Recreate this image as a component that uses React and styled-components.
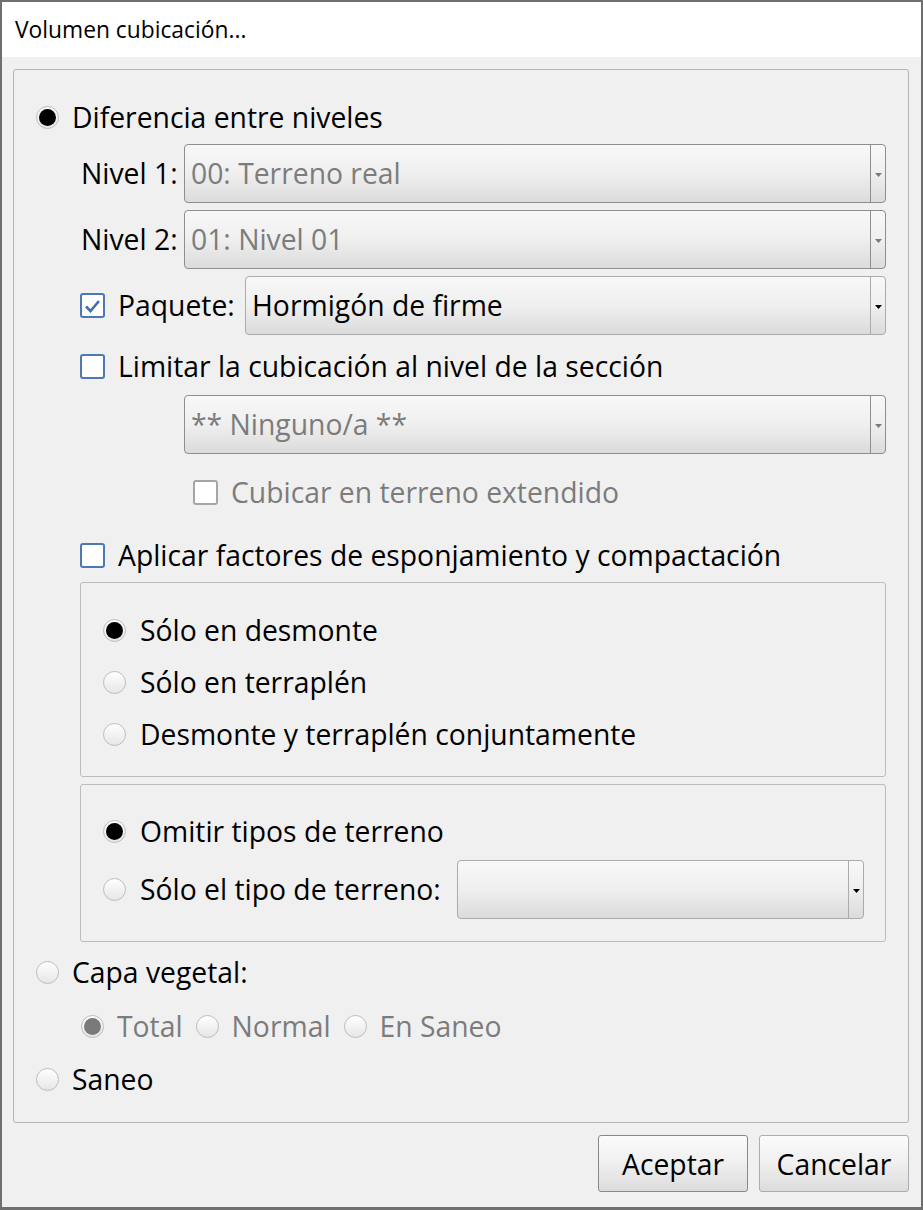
import styled, { createGlobalStyle } from "styled-components";

const GlobalStyle = createGlobalStyle`
  html, body {
    margin: 0;
    padding: 0;
    background: #ffffff;
  }
  * {
    box-sizing: border-box;
  }
`;

const FONT = `"Open Sans", "Liberation Sans", sans-serif`;

const Window = styled.div`
  width: 923px;
  height: 1210px;
  border: 2px solid #6f6f6f;
  border-bottom-width: 3px;
  display: flex;
  flex-direction: column;
  font-family: ${FONT};
  font-size: 28.3px;
  line-height: 1.3;
  color: #000;
  background: #f0f0f0;
`;

const TitleBar = styled.div`
  height: 55px;
  flex-shrink: 0;
  background: #ffffff;
  display: flex;
  align-items: center;
  padding-left: 13px;
  font-size: 22.8px;
`;

const Body = styled.div`
  flex: 1;
  display: flex;
  flex-direction: column;
  padding: 12px 12px 16px 11px;
`;

const Panel = styled.div`
  border: 1px solid #b4b4b4;
  border-radius: 3px;
  padding: 27px 22px 23px 22px;
  display: flex;
  flex-direction: column;
`;

const Row = styled.div`
  display: flex;
  align-items: center;
  height: ${(p) => p.$height || 40}px;
  margin-top: ${(p) => p.$top || 0}px;
  margin-left: ${(p) => p.$indent || 0}px;
`;

const Group = styled.div`
  margin-top: ${(p) => p.$top || 0}px;
  margin-left: 44px;
  border: 1px solid #bcbcbc;
  border-radius: 3px;
  padding: ${(p) => p.$pad || "27px 21px 22px 22px"};
  display: flex;
  flex-direction: column;
`;

const Text = styled.span`
  color: ${(p) => (p.$disabled ? "#7c7c7c" : "#000")};
  margin-left: ${(p) => p.$gap ?? 13}px;
  white-space: nowrap;
  width: ${(p) => (p.$width ? `${p.$width}px` : "auto")};
  flex-shrink: 0;
`;

const Radio = styled.span`
  width: 23px;
  height: 23px;
  flex-shrink: 0;
  border-radius: 50%;
  border: 1px solid #bdbdbd;
  background: linear-gradient(#ffffff, #e6e6e6);
  display: flex;
  align-items: center;
  justify-content: center;
  margin-left: ${(p) => p.$left || 0}px;

  &::after {
    content: "";
    display: ${(p) => (p.$checked ? "block" : "none")};
    width: 17px;
    height: 17px;
    border-radius: 50%;
    background: ${(p) => (p.$disabled ? "#7a7a7a" : "#000")};
  }
`;

const Check = styled.span`
  width: 25px;
  height: 25px;
  flex-shrink: 0;
  border: 2px solid ${(p) => (p.$disabled ? "#a6a6a6" : "#4a79b5")};
  border-radius: 3px;
  background: #ffffff;
  display: flex;
  align-items: center;
  justify-content: center;

  svg {
    display: block;
  }
`;

const Combo = styled.div`
  flex: 1;
  height: 59px;
  margin-left: ${(p) => p.$left || 0}px;
  border: 1px solid ${(p) => (p.$disabled ? "#8e8e8e" : "#ababab")};
  border-radius: 4px;
  background: linear-gradient(#f8f8f8 0%, #efefef 50%, #dbdbdb 100%);
  display: flex;
  align-items: stretch;
  color: ${(p) => (p.$disabled ? "#7c7c7c" : "#000")};
`;

const ComboValue = styled.div`
  flex: 1;
  display: flex;
  align-items: center;
  padding-left: 6px;
  white-space: nowrap;
  overflow: hidden;
`;

const ComboArrow = styled.div`
  width: 15px;
  border-left: 1px solid ${(p) => (p.$disabled ? "#8e8e8e" : "#ababab")};
  display: flex;
  align-items: center;
  justify-content: center;
  padding-top: 3px;
`;

const Footer = styled.div`
  display: flex;
  justify-content: flex-end;
  gap: 11px;
  margin-top: 12px;
`;

const Button = styled.button`
  width: 150px;
  height: 57px;
  font-family: ${FONT};
  font-size: 28.3px;
  color: #000;
  border: 1px solid ${(p) => (p.$primary ? "#888888" : "#adadad")};
  border-radius: 3px;
  background: linear-gradient(#fbfbfb 0%, #efefef 50%, #dcdcdc 100%);
  padding: 0;
`;

const CheckBox = ({ checked, disabled }) => (
  <Check $disabled={disabled}>
    {checked && (
      <svg width="17" height="14" viewBox="0 0 17 14">
        <path
          d="M2 7.5 L6.5 12 L15 2"
          fill="none"
          stroke="#3e6fb0"
          strokeWidth="2.6"
        />
      </svg>
    )}
  </Check>
);

const Select = ({ value, disabled, left }) => (
  <Combo $disabled={disabled} $left={left}>
    <ComboValue>{value}</ComboValue>
    <ComboArrow $disabled={disabled}>
      <svg width="7" height="4" viewBox="0 0 7 4">
        <path d="M0 0 L7 0 L3.5 4 Z" fill={disabled ? "#7a7a7a" : "#000"} />
      </svg>
    </ComboArrow>
  </Combo>
);

export default function App() {
  return (
    <>
      <GlobalStyle />
      <Window>
        <TitleBar>Volumen cubicación...</TitleBar>
        <Body>
          <Panel>
            <Row>
              <Radio $checked />
              <Text>Diferencia entre niveles</Text>
            </Row>

            <Row $top={7} $indent={45} $height={59}>
              <Text $gap={0} $width={103}>Nivel 1:</Text>
              <Select value="00: Terreno real" disabled />
            </Row>
            <Row $top={7} $indent={45} $height={59}>
              <Text $gap={0} $width={103}>Nivel 2:</Text>
              <Select value="01: Nivel 01" disabled />
            </Row>
            <Row $top={7} $indent={44} $height={59}>
              <CheckBox checked />
              <Text $width={127}>Paquete:</Text>
              <Select value="Hormigón de firme" />
            </Row>

            <Row $top={11} $indent={44}>
              <CheckBox />
              <Text>Limitar la cubicación al nivel de la sección</Text>
            </Row>
            <Row $top={9} $indent={148} $height={59}>
              <Select value="** Ninguno/a **" disabled />
            </Row>
            <Row $top={18} $indent={157}>
              <CheckBox disabled />
              <Text $disabled>Cubicar en terreno extendido</Text>
            </Row>

            <Row $top={23} $indent={44}>
              <CheckBox />
              <Text>Aplicar factores de esponjamiento y compactación</Text>
            </Row>

            <Group $top={7}>
              <Row>
                <Radio $checked />
                <Text $gap={14}>Sólo en desmonte</Text>
              </Row>
              <Row $top={12}>
                <Radio />
                <Text $gap={14}>Sólo en terraplén</Text>
              </Row>
              <Row $top={12}>
                <Radio />
                <Text $gap={14}>Desmonte y terraplén conjuntamente</Text>
              </Row>
            </Group>

            <Group $top={7} $pad="26px 21px 22px 22px">
              <Row>
                <Radio $checked />
                <Text $gap={14}>Omitir tipos de terreno</Text>
              </Row>
              <Row $top={9} $height={59}>
                <Radio />
                <Text $gap={14} $width={317}>Sólo el tipo de terreno:</Text>
                <Select value="" />
              </Row>
            </Group>

            <Row $top={10}>
              <Radio />
              <Text>Capa vegetal:</Text>
            </Row>
            <Row $top={14} $indent={45}>
              <Radio $checked $disabled />
              <Text $disabled>Total</Text>
              <Radio $left={13} />
              <Text $disabled>Normal</Text>
              <Radio $left={13} />
              <Text $disabled>En Saneo</Text>
            </Row>
            <Row $top={13}>
              <Radio />
              <Text>Saneo</Text>
            </Row>
          </Panel>

          <Footer>
            <Button $primary>Aceptar</Button>
            <Button>Cancelar</Button>
          </Footer>
        </Body>
      </Window>
    </>
  );
}
